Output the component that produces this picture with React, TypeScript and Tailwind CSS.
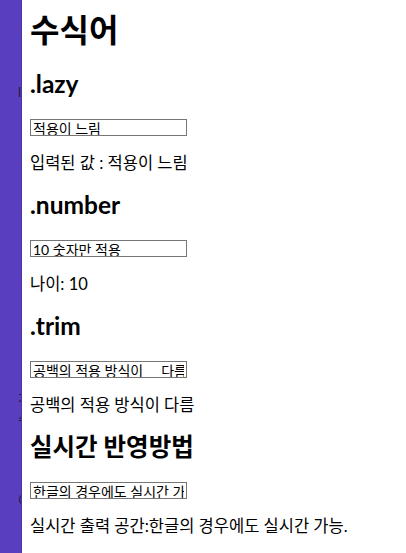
import React, { useState } from 'react';

const font = { fontFamily: 'Lato, "Noto Sans CJK KR", "Noto Sans", sans-serif' };

function Section({
    title,
    initial,
    label,
    render,
}: {
    title: string;
    initial: string;
    label: string;
    render?: (v: string) => string;
}) {
    const [value, setValue] = useState(initial);
    const shown = render ? render(value) : value;
    return (
        <section className="mb-[18px]">
            <h2 className="text-[24.5px] leading-[28px] font-bold text-black">{title}</h2>
            <input
                value={value}
                onChange={(e) => setValue(e.target.value)}
                className="mt-[21px] block w-[157px] h-[17px] border border-[#767676] px-[2px] text-[14px] leading-[14px] text-black outline-none"
                style={font}
            />
            <p className="mt-[17px] text-[16.5px] leading-[20px] text-black">
                {label}
                {shown}
            </p>
        </section>
    );
}

export default function App() {
    return (
        <div className="flex min-h-[553px] bg-white" style={font}>
            <aside className="w-[22px] shrink-0 overflow-hidden bg-[#5a3ec0] border-r border-[#4c33a6]">
                <div className="pl-[18px] pt-[84px] text-[13px] leading-[16px] whitespace-nowrap text-[#1d1a3a]">
                    <div>l</div>
                    <div className="mt-[290px]">가</div>
                    <div className="mt-[5px]">수</div>
                    <div className="mt-[65px]">이</div>
                </div>
            </aside>
            <main className="flex-1 pl-2">
                <h1 className="mt-[11px] mb-[21px] text-[32px] leading-[38px] font-bold text-black">수식어</h1>
                <Section title=".lazy" initial="적용이 느림" label="입력된 값 : " />
                <Section title=".number" initial="10 숫자만 적용" label="나이: " render={(v) => String(parseFloat(v))} />
                <Section
                    title=".trim"
                    initial="공백의 적용 방식이     다름"
                    label=""
                    render={(v) => v.trim()}
                />
                <Section title="실시간 반영방법" initial="한글의 경우에도 실시간 가능." label="실시간 출력 공간:" />
            </main>
        </div>
    );
}
